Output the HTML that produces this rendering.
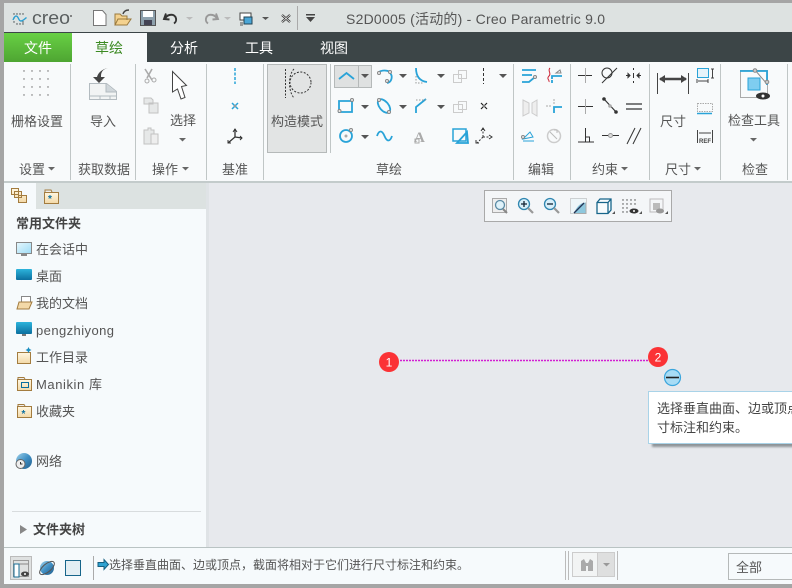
<!DOCTYPE html>
<html><head><meta charset="utf-8"><style>
html,body{margin:0;padding:0;width:792px;height:588px;overflow:hidden;background:#e7e9ed}
svg{position:absolute;left:0;top:0;display:block}
text{font-family:"Liberation Sans","Noto Sans CJK SC",sans-serif;font-size:13px;fill:#555}
.c{text-anchor:middle}
.b{font-weight:700;fill:#444}
.s{fill:none;stroke:#29a3d8;stroke-width:1.8}
.a{fill:#666}
.t{font-size:14px}
</style></head><body>
<svg width="792" height="588" viewBox="0 0 792 588">
<defs>
<linearGradient id="gr" x1="0" y1="0" x2="0" y2="1"><stop offset="0" stop-color="#68d044"/><stop offset="1" stop-color="#4ea532"/></linearGradient>
<linearGradient id="bl" x1="0" y1="0" x2="0" y2="1"><stop offset="0" stop-color="#2cb4dc"/><stop offset="1" stop-color="#0b6f9f"/></linearGradient>
<linearGradient id="fo" x1="0" y1="0" x2="0" y2="1"><stop offset="0" stop-color="#fff7e2"/><stop offset="1" stop-color="#f3d9a8"/></linearGradient>
<linearGradient id="sc" x1="0" y1="0" x2="1" y2="1"><stop offset="0" stop-color="#e6f7fd"/><stop offset="1" stop-color="#9edcf6"/></linearGradient>
<linearGradient id="gb" x1="0" y1="0" x2="1" y2="1"><stop offset="0" stop-color="#9fd2ea"/><stop offset=".5" stop-color="#3f8fc4"/><stop offset="1" stop-color="#235f8c"/></linearGradient>
<filter id="bs" x="-10%" y="-10%" width="120%" height="120%"><feGaussianBlur stdDeviation="1"/></filter>
</defs>
<!-- base -->
<rect width="792" height="588" fill="#e7e9ed"/>
<rect x="0" y="0" width="792" height="3" fill="#a5a5a5"/>
<rect x="0" y="3" width="792" height="29" fill="#dde2e1"/>
<rect x="0" y="32" width="792" height="30" fill="#3c4547"/>
<rect x="4" y="62" width="788" height="119" fill="#f8fafb"/>
<rect x="4" y="181" width="788" height="2" fill="#c3cbcb"/>
<rect x="4" y="33" width="68" height="29" fill="url(#gr)"/>
<rect x="72" y="33" width="75" height="29" fill="#f8fafb"/>
<!-- left panel -->
<rect x="4" y="183" width="203" height="364" fill="#f6fafc"/>
<rect x="36" y="183" width="171" height="26" fill="#dce2e1"/>
<rect x="206" y="183" width="3" height="364" fill="#dfe3e6"/>
<rect x="12" y="511" width="189" height="1" fill="#d8dcde"/>
<!-- status bar -->
<rect x="4" y="547" width="788" height="1" fill="#b9c3c3"/>
<rect x="4" y="548" width="788" height="36" fill="#f6fafc"/>
<rect x="0" y="584" width="792" height="4" fill="#a5a5a5"/>
<rect x="0" y="0" width="4" height="588" fill="#a5a5a5"/>

<!-- title bar -->
<g fill="#3c4547"><circle cx="14" cy="14" r=".7"/><circle cx="17" cy="14" r=".7"/><circle cx="20" cy="14" r=".7"/><circle cx="23" cy="14" r=".7"/><circle cx="14" cy="18" r=".7"/><circle cx="14" cy="22" r=".7"/><circle cx="23" cy="22" r=".7"/><circle cx="17" cy="24" r=".7"/><circle cx="20" cy="24" r=".7"/><circle cx="23" cy="24" r=".7"/></g>
<path d="M13 20c2-5 4-5 5.500-1.500s3 3.500 8-1" fill="none" stroke="#2c9fd1" stroke-width="1.400"/>
<text x="32" y="24" textLength="38" lengthAdjust="spacingAndGlyphs" style="font-size:18px;fill:#5a5f60">creo</text><circle cx="71" cy="16" r="1" fill="#666"/>
<path d="M93.500 10.500h9l3.500 4v11h-12.500z" fill="#fff" stroke="#777"/>
<path d="M115 25V14h5l2 2h5v4M115 25l3-6h13l-4 6z" fill="#f4d28f" stroke="#9a7a3e"/><path d="M123 14c1-3 3-4 6-4" fill="none" stroke="#444" stroke-width="1.500"/>
<rect x="140.500" y="10.500" width="15" height="15" fill="#8da0ac" stroke="#555"/><rect x="143" y="11" width="10" height="6" fill="#fff"/><rect x="144" y="20" width="8" height="5" fill="#445"/>
<path d="M166 13.500l-2 5.500 5.500.5M165 18.500c3-5 10-5 11 0 .5 2-.5 4-2 5" fill="none" stroke="#333" stroke-width="1.900"/>
<path d="M186 17l3.500 3 3.500-3z" fill="#bbb"/>
<path d="M216 13.500l2 5.500-5.500.5M217 18.500c-3-5-10-5-11 0-.5 2 .5 4 2 5" fill="none" stroke="#999" stroke-width="1.900"/>
<path d="M224 17l3.500 3 3.500-3z" fill="#bbb"/>
<rect x="240" y="13" width="11" height="7" fill="#fff" stroke="#444"/><rect x="244" y="17" width="8" height="7" fill="#4aa6d6" stroke="#245"/><path d="M240 23h3M240 25h3" stroke="#555"/>
<path d="M262 17l3.500 3 3.500-3z" fill="#555"/>
<path d="M282 15l8 7M290 15l-8 7" stroke="#333" stroke-width="2.200"/><path d="M282 15l8 7M290 15l-8 7" stroke="#fff" stroke-width=".6"/>
<rect x="297" y="6" width="1" height="24" fill="#aaa"/>
<rect x="306" y="14" width="9" height="1.500" fill="#444"/><path d="M306 17l4.500 5 4.500-5z" fill="#444"/>
<text x="346" y="24" textLength="259" style="font-size:14px;fill:#555">S2D0005 (活动的) - Creo Parametric 9.0</text>

<!-- tabs -->
<text x="38" y="53" class="c t" style="fill:#fff">文件</text>
<text x="109" y="53" class="c t" style="fill:#3c8a22">草绘</text>
<text x="184" y="53" class="c t" style="fill:#fff">分析</text>
<text x="259" y="53" class="c t" style="fill:#fff">工具</text>
<text x="334" y="53" class="c t" style="fill:#fff">视图</text>

<!-- ribbon separators -->
<g fill="#c0c6c6"><rect x="70" y="64" width="1" height="116"/><rect x="135" y="64" width="1" height="116"/><rect x="206" y="64" width="1" height="116"/><rect x="263" y="64" width="1" height="116"/><rect x="513" y="64" width="1" height="116"/><rect x="570" y="64" width="1" height="116"/><rect x="649" y="64" width="1" height="116"/><rect x="720" y="64" width="1" height="116"/><rect x="787" y="64" width="1" height="116"/><rect x="330" y="64" width="1" height="89"/></g>

<!-- 设置 -->
<g fill="#666"><circle cx="24" cy="71" r=".7"/><circle cx="32" cy="71" r=".7"/><circle cx="40" cy="71" r=".7"/><circle cx="48" cy="71" r=".7"/><circle cx="24" cy="79" r=".7"/><circle cx="32" cy="79" r=".7"/><circle cx="40" cy="79" r=".7"/><circle cx="48" cy="79" r=".7"/><circle cx="24" cy="87" r=".7"/><circle cx="32" cy="87" r=".7"/><circle cx="40" cy="87" r=".7"/><circle cx="48" cy="87" r=".7"/><circle cx="24" cy="95" r=".7"/><circle cx="32" cy="95" r=".7"/><circle cx="40" cy="95" r=".7"/><circle cx="48" cy="95" r=".7"/></g>
<text x="37" y="126" class="c">栅格设置</text>
<text x="32" y="174" class="c">设置</text><path d="M48 167l3.500 3.500 3.500-3.500z" class="a"/>
<!-- 导入 -->
<path d="M89.500 83.500h17l10 8v8h-27z" fill="#f2f4f4" stroke="#b3bbc0"/><path d="M106 84v8h10" fill="#cfd6da" stroke="#b3bbc0"/><path d="M100 96v3M110 96v3M90 96h27" stroke="#b3bbc0"/>
<path d="M108 68c-5 1-7 4-7 8v1h4l-6 6-6-6h4c1-4 5-8 11-9z" fill="#444"/>
<text x="103" y="126" class="c">导入</text>
<text x="104" y="174" class="c">获取数据</text>
<!-- 操作 -->
<path d="M145 69l7 11M152 69l-5 9" stroke="#aaa" stroke-width="1.600" fill="none"/><circle cx="147" cy="81" r="2" fill="none" stroke="#aaa"/><circle cx="154" cy="80" r="2" fill="none" stroke="#aaa"/>
<path d="M144 98h7l2 2v4h-9zM149 103h9v10h-9z" fill="#e6e8e8" stroke="#c2c2c2"/>
<path d="M144 130h4v-2h3v2h3v14h-10z" fill="#e6e8e8" stroke="#c2c2c2"/><rect x="151" y="134" width="7" height="10" fill="#eee" stroke="#c2c2c2"/>
<path d="M172.500 71.500l14 14-5 1 3.500 11-4 1.500-3.500-10-5 3z" fill="#fff" stroke="#444" stroke-width="1"/>
<text x="183" y="125" class="c">选择</text><path d="M179 138l3.500 3.500 3.500-3.500z" class="a"/>
<text x="165" y="174" class="c">操作</text><path d="M182 167l3.500 3.500 3.500-3.500z" class="a"/>
<!-- 基准 -->
<path d="M235 68v16" stroke="#29a3d8" stroke-width="1.500" stroke-dasharray="3 1.500"/>
<path d="M232 103l6 6M238 103l-6 6" stroke="#29a3d8" stroke-width="1.500"/><circle cx="235" cy="106" r="1.200" fill="#999"/>
<path d="M235 129v8l-7 6M235 137l7 1" fill="none" stroke="#333" stroke-width="1.300"/><path d="M233 132l2-3 2 3M228 140v3h3M240 136l2 2-2 2" fill="none" stroke="#333"/>
<text x="235" y="174" class="c">基准</text>
<!-- 构造模式 -->
<rect x="267.500" y="64.500" width="59" height="88" fill="#e2e4e4" stroke="#b5b9b9"/>
<path d="M285.500 69v29" stroke="#333" stroke-dasharray="2 1.500"/><path d="M294 69c-6 6-6 22 0 29" fill="none" stroke="#333" stroke-dasharray="2 1.500"/><circle cx="300.500" cy="82.500" r="10.500" fill="none" stroke="#333" stroke-dasharray="2 1.500"/>
<text x="297" y="126" class="c">构造模式</text>
<text x="389" y="174" class="c">草绘</text>
<!-- sketch icons col 1 -->
<rect x="334.500" y="65.500" width="37" height="22" fill="#dfe1e1" stroke="#b5b9b9"/><path d="M358.500 65.500v22" stroke="#b5b9b9"/>
<path d="M339 79l7.500-6 7.500 6" class="s"/><path d="M361 74l4 4 4-4z" fill="#555"/>
<path d="M379 72c3-2 8-2 11 0" class="s"/><path d="M390 73c3 3 2 9-3 10" class="s"/>
<circle cx="379" cy="73" r="1.500" fill="#eee" stroke="#888"/><circle cx="390" cy="72" r="1.500" fill="#eee" stroke="#888"/><circle cx="387" cy="81" r="1.500" fill="#eee" stroke="#888"/>
<path d="M399 74l4 4 4-4zM437 74l4 4 4-4zM499 74l4 4 4-4zM361 105l4 4 4-4zM399 105l4 4 4-4zM437 105l4 4 4-4zM361 135l4 4 4-4z" fill="#555"/>
<path d="M416 68c0 8 3 13 11 14" class="s"/><path d="M416 76v7h7" fill="none" stroke="#999" stroke-dasharray="1.500 1.500"/>
<g fill="none" stroke="#ccc"><rect x="458.500" y="70.500" width="8" height="8"/><rect x="453.500" y="74.500" width="8" height="8"/><rect x="458.500" y="101.500" width="8" height="8"/><rect x="453.500" y="104.500" width="9" height="8"/></g>
<path d="M483.500 68v16" stroke="#333" stroke-dasharray="3 2"/>
<path d="M339 101h13v11h-13z" class="s"/><circle cx="339.500" cy="111" r="1.500" fill="#eee" stroke="#888"/><circle cx="352" cy="100" r="1.500" fill="#eee" stroke="#888"/>
<ellipse cx="384" cy="106" rx="4.500" ry="8" transform="rotate(-40 384 106)" class="s"/><circle cx="379" cy="100" r="1.500" fill="#eee" stroke="#888"/><circle cx="389" cy="112" r="1.500" fill="#eee" stroke="#888"/>
<path d="M416 113v-6l10-8" class="s"/><path d="M416 100h10" stroke="#999" stroke-dasharray="1.500 1.500"/>
<path d="M481 103l6 6M487 103l-6 6" stroke="#222" stroke-width="1.200"/><circle cx="484" cy="106" r="1" fill="#999"/>
<circle cx="346" cy="136" r="6" class="s"/><circle cx="346" cy="136" r="1.500" fill="#aaa"/><circle cx="351" cy="130" r="1.500" fill="#eee" stroke="#888"/>
<path d="M377 136c2-6 5-6 7.500 0s5.500 6 7.500 0" class="s"/>
<text x="414" y="142" style="font-family:'Liberation Serif',serif;font-size:15px;font-weight:700;fill:#aaa">A</text><rect x="415" y="139" width="4" height="4" fill="none" stroke="#aaa"/>
<rect x="453" y="129" width="13" height="12" fill="none" stroke="#29a3d8" stroke-width="1.500"/><path d="M467 132l-10 11h11z" class="s"/>
<path d="M483 137v-8M483 137h7M483 137l-6 6" stroke="#333" stroke-dasharray="2 1.500" fill="none"/><path d="M481 131l2-3 2 3M489 135l3 2-3 2M476 140v3h3" fill="none" stroke="#333"/>
<!-- edit -->
<path d="M522 70h14M522 75h10M522 82h7l6-5" class="s"/><circle cx="535" cy="77" r="1.500" fill="#eee" stroke="#888"/>
<path d="M550 68c-3 3 2 5-1 8s1 4 0 6" fill="none" stroke="#c23" stroke-width="1"/><path d="M552 79v-3h10M552 83v-3" class="s"/><path d="M556 73l4-3 1 3z" fill="none" stroke="#888"/>
<path d="M523 100l6 3v10l-6 3zM537 100l-5 3v10l5 3z" fill="#eee" stroke="#ccc"/>
<path d="M546 106h5" stroke="#aaa" stroke-dasharray="2 1"/><path d="M554 99v6" stroke="#aaa" stroke-dasharray="2 1"/><path d="M554 113v-6h8" class="s"/>
<path d="M523 139l7-7 3 5zM523 141h11" fill="none" stroke="#29a3d8"/><circle cx="523" cy="137" r="1.500" fill="#eee" stroke="#888"/>
<circle cx="554" cy="136" r="6.500" fill="none" stroke="#ccc" stroke-width="1.500"/><path d="M550 132l7 7M557 133v-3h-3" fill="none" stroke="#bbb"/>
<text x="541" y="174" class="c">编辑</text>
<!-- constraints -->
<g fill="none" stroke="#333"><path d="M578 75.500h14" stroke="#333"/><path d="M585.500 68v15" stroke="#aaa"/>
<circle cx="607" cy="73" r="5"/><path d="M602 83l15-15"/>
<path d="M626 75.500h4M637 75.500h4M633.500 68v2M633.500 73v5M633.500 81v2M630 75.500l-2-2v4zM637 75.500l2-2v4z"/>
<path d="M578 106.500h15"/><path d="M585.500 99v15" stroke="#aaa"/>
<path d="M604 99l13 14" stroke-width="1.200"/>
<path d="M626 104h16M626 109h16" stroke-width="1.200"/>
<path d="M578 142h16M585.500 128v14M585.500 137h4v5"/>
<path d="M602 135.500h6M613 135.500h6"/><circle cx="610.500" cy="135.500" r="2" fill="#ddd" stroke="#999"/>
<path d="M627 144l8-16M633 144l8-16"/></g>
<circle cx="604" cy="99" r="1.800" fill="#333"/><circle cx="616" cy="112" r="1.800" fill="#333"/><circle cx="610" cy="106" r="1.800" fill="#aaa"/>
<text x="605" y="174" class="c">约束</text><path d="M621 167l3.500 3.500 3.500-3.500z" class="a"/>
<!-- dimension -->
<path d="M657.500 73v21M688.500 73v21" stroke="#444"/><path d="M660 79h26" stroke="#444" stroke-width="2.500"/><path d="M659 79l6-4v8zM687 79l-6-4v8z" fill="#444"/>
<text x="673" y="126" class="c">尺寸</text>
<rect x="697.500" y="68.500" width="11" height="9" fill="#e6f3fa" stroke="#29a3d8"/><path d="M711 69h3M712.500 69v9M711 78h3M697 79v4M708 79v4M698 81h10" stroke="#444" fill="none"/>
<rect x="697.500" y="103.500" width="15" height="8" fill="none" stroke="#aaa" stroke-dasharray="1.500 1"/><path d="M697 113.500h15" stroke="#29a3d8" stroke-width="1.500"/>
<path d="M697.500 130v13M712.500 130v13M699 133h12" stroke="#444" fill="none"/>
<text x="699" y="143" textLength="12" lengthAdjust="spacingAndGlyphs" style="font-size:6px;font-weight:700;fill:#444">REF</text>
<text x="678" y="174" class="c">尺寸</text><path d="M694 167l3.500 3.500 3.500-3.500z" class="a"/>
<!-- inspect -->
<rect x="740.500" y="70.500" width="27" height="27" fill="none" stroke="#aaa"/><path d="M740 71h27v14" class="s"/><rect x="748" y="78" width="12" height="12" fill="#7fcdf0" stroke="#29a3d8"/><path d="M755 70l12 14" stroke="#888"/><circle cx="755" cy="70.500" r="1.800" fill="#ccc" stroke="#888"/><circle cx="767" cy="82" r="1.800" fill="#ccc" stroke="#888"/>
<ellipse cx="763" cy="96" rx="7" ry="3.500" fill="#333"/><circle cx="763" cy="96" r="1.500" fill="#fff"/>
<text x="754" y="125" class="c">检查工具</text><path d="M750 138l3.500 3.500 3.500-3.500z" class="a"/>
<text x="755" y="174" class="c">检查</text>

<!-- panel tabs icons -->
<path d="M11.500 188.500h7v6h-7zM14.500 191.500h7v6h-7zM18.500 195.500h8v7h-8z" fill="url(#fo)" stroke="#a37c3f"/>
<rect x="44.500" y="192.500" width="14" height="11" fill="url(#fo)" stroke="#a37c3f"/><path d="M45 192v-2h6l1 2" fill="#eee" stroke="#a37c3f"/><text x="48" y="202" style="font-size:10px;fill:#0b6f9f;font-weight:700">*</text>

<!-- panel text -->
<text x="16" y="228" class="b">常用文件夹</text>
<rect x="16.500" y="242.500" width="15" height="11" fill="url(#sc)" stroke="#888"/><rect x="21" y="254" width="6" height="2" fill="#888"/>
<text x="36" y="254">在会话中</text>
<rect x="16" y="269" width="16" height="11" rx="1" fill="url(#bl)"/>
<text x="36" y="281">桌面</text>
<rect x="21.500" y="296.500" width="9" height="8" fill="#fff" stroke="#888"/><path d="M17 309l2-7h13l-3 7z" fill="#f3d9a8" stroke="#a37c3f"/>
<text x="36" y="308">我的文档</text>
<rect x="16" y="322" width="16" height="12" rx="1" fill="url(#bl)"/><rect x="22" y="334" width="4" height="2" fill="#777"/>
<text x="36" y="335" textLength="78">pengzhiyong</text>
<rect x="17.500" y="352.500" width="13" height="11" fill="url(#fo)" stroke="#a37c3f"/><path d="M28.500 347l1 2 2 1-2 1-1 2-1-2-2-1 2-1z" fill="#1a8dbf"/>
<text x="36" y="362">工作目录</text>
<rect x="17.500" y="379.500" width="14" height="11" fill="url(#fo)" stroke="#a37c3f"/><path d="M18 379v-1.500h6l1 1.500" fill="#eee" stroke="#a37c3f"/><rect x="21.500" y="382.500" width="7" height="5" fill="none" stroke="#0b6f9f"/>
<text x="36" y="389" textLength="66">Manikin 库</text>
<rect x="17.500" y="406.500" width="14" height="11" fill="url(#fo)" stroke="#a37c3f"/><path d="M18 406v-1.500h6l1 1.500" fill="#eee" stroke="#a37c3f"/><text x="21.500" y="417" style="font-size:10px;fill:#0b6f9f;font-weight:700">*</text>
<text x="36" y="416">收藏夹</text>
<circle cx="24" cy="461" r="8" fill="url(#gb)"/><circle cx="20.500" cy="464" r="4.500" fill="#eee" stroke="#666"/><path d="M20.500 462v2h2" stroke="#333" fill="none"/>
<text x="36" y="466">网络</text>
<path d="M20 525l7 4.500-7 4.500z" fill="#888"/>
<text x="33" y="534" class="b">文件夹树</text>

<!-- mini toolbar -->
<rect x="484.500" y="190.500" width="187" height="31" fill="#f4f6f8" stroke="#a9a9a9"/>
<rect x="492.500" y="198.500" width="14" height="14" fill="#eee" stroke="#aaa"/><circle cx="500" cy="205" r="4.500" fill="#dff2fa" stroke="#5a8ba5" stroke-width="1.300"/><path d="M503 209l4 4" stroke="#888" stroke-width="2"/>
<circle cx="524" cy="204" r="5.500" fill="#d8effa" stroke="#2f86b0" stroke-width="1.300"/><path d="M521 204h6M524 201v6" stroke="#123" stroke-width="1.300"/><path d="M528 208l5 5" stroke="#999" stroke-width="2.200"/>
<circle cx="550" cy="204" r="5.500" fill="#d8effa" stroke="#2f86b0" stroke-width="1.300"/><path d="M547 204h6" stroke="#123" stroke-width="1.300"/><path d="M554 208l5 5" stroke="#999" stroke-width="2.200"/>
<rect x="571" y="198.500" width="15" height="15" fill="#8ec8de" stroke="#aaa"/><path d="M571 198.500h15v4c-6 0-10 5-12 11h-3z" fill="#eef6f9"/><path d="M574 213l10-10" stroke="#235" stroke-width="1.300"/>
<path d="M597 202.500l3-3.500h11v11l-3 3.500h-11zM597 202.500h11v11M608 202.500l3-3.500" fill="#f7fbfd" stroke="#17658a" stroke-width="1.300"/>
<g fill="#444"><circle cx="623" cy="200" r=".7"/><circle cx="627" cy="200" r=".7"/><circle cx="631" cy="200" r=".7"/><circle cx="635" cy="200" r=".7"/><circle cx="623" cy="204" r=".7"/><circle cx="627" cy="204" r=".7"/><circle cx="631" cy="204" r=".7"/><circle cx="635" cy="204" r=".7"/><circle cx="623" cy="208" r=".7"/><circle cx="627" cy="208" r=".7"/><circle cx="623" cy="212" r=".7"/><circle cx="627" cy="212" r=".7"/></g>
<ellipse cx="634" cy="211" rx="4.500" ry="2.500" fill="#333"/><circle cx="634" cy="211" r="1" fill="#fff"/>
<rect x="650" y="199" width="13" height="13" fill="none" stroke="#bbb"/><rect x="653" y="203" width="7" height="7" fill="#bbb"/><ellipse cx="660" cy="211" rx="4" ry="2.500" fill="#999"/>
<g fill="#555"><path d="M612 214l3 0 0-3zM639 214l3 0 0-3zM665 214l3 0 0-3z"/></g>

<!-- canvas -->
<path d="M400 360.500h248" stroke="#d21fd2" stroke-width="1.500" stroke-dasharray="2 1"/>
<circle cx="389" cy="362" r="10" fill="#fb3235"/><text x="389" y="366.500" class="c" style="fill:#fff;font-size:12px">1</text>
<circle cx="658" cy="357" r="10" fill="#fb3235"/><text x="658" y="361.500" class="c" style="fill:#fff;font-size:12px">2</text>
<circle cx="672.500" cy="377.500" r="8" fill="#a8dcf5" stroke="#3ba5dc" stroke-width="1.200"/><path d="M666 377.500h13" stroke="#222" stroke-width="1.600"/>
<rect x="652" y="397" width="145" height="50" fill="#6f777b" opacity=".75" filter="url(#bs)"/>
<rect x="648.500" y="391.500" width="150" height="52" fill="#fff" stroke="#a9d3e8"/>
<text x="657" y="413" style="fill:#444">选择垂直曲面、边或顶点</text>
<text x="657" y="432" style="fill:#444">寸标注和约束。</text>

<!-- status bar -->
<rect x="10.500" y="556.500" width="21" height="23" fill="#dfe1e1" stroke="#bbb"/>
<rect x="13.500" y="560.500" width="15" height="16" fill="none" stroke="#999"/><path d="M13.500 564h15" stroke="#888"/><rect x="14" y="564" width="5" height="13" fill="#fff" stroke="#1a6e95"/><ellipse cx="25" cy="574" rx="4" ry="2.500" fill="#444"/><circle cx="25" cy="574" r="1" fill="#fff"/>
<circle cx="47" cy="568" r="7" fill="url(#gb)"/><ellipse cx="47" cy="568" rx="9" ry="4" transform="rotate(-40 47 568)" fill="none" stroke="#555"/>
<rect x="65.500" y="560.500" width="15" height="15" fill="#e3eef3" stroke="#17658a"/>
<rect x="93" y="556" width="1" height="24" fill="#aaa"/>
<path d="M98 562.500h6v-3l4.500 5-4.500 5v-3h-6z" fill="#2ea2d1" stroke="#155f80"/>
<text x="109" y="569" style="font-size:12px">选择垂直曲面、边或顶点，截面将相对于它们进行尺寸标注和约束。</text>
<rect x="565" y="551" width="1" height="29" fill="#bbb"/><rect x="568" y="551" width="1" height="29" fill="#bbb"/>
<rect x="572.500" y="552.500" width="42" height="24" fill="#f2f4f4" stroke="#ccc"/><rect x="597.500" y="552.500" width="17" height="24" fill="#dedfdf" stroke="#ccc"/>
<path d="M581 571v-10l3-2 2 4h2l2-4 3 2v10h-5v-5h-2v5z" fill="#aaa"/><path d="M603 563l3.500 3.500 3.500-3.500z" fill="#999"/>
<rect x="617" y="551" width="1" height="29" fill="#bbb"/>
<rect x="728.500" y="553.500" width="70" height="26" fill="#f6fafc" stroke="#b5b9b9"/>
<text x="736" y="572">全部</text>
</svg>
</body></html>
